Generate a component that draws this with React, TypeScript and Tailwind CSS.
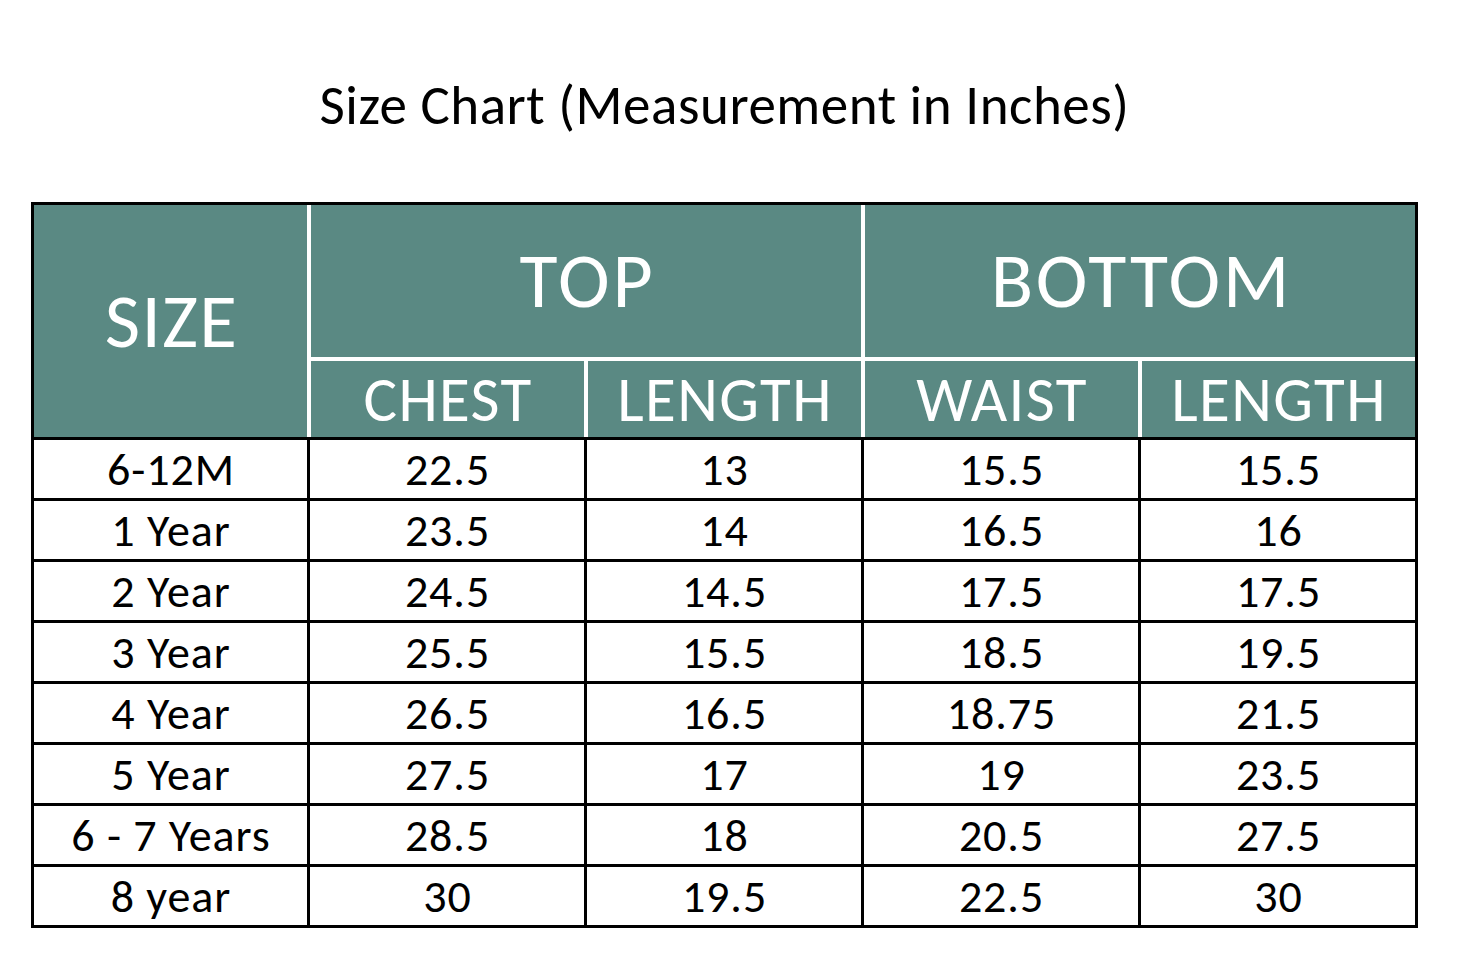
import React from "react";

const rows = [
  ["6-12M", "22.5", "13", "15.5", "15.5"],
  ["1 Year", "23.5", "14", "16.5", "16"],
  ["2 Year", "24.5", "14.5", "17.5", "17.5"],
  ["3 Year", "25.5", "15.5", "18.5", "19.5"],
  ["4 Year", "26.5", "16.5", "18.75", "21.5"],
  ["5 Year", "27.5", "17", "19", "23.5"],
  ["6 - 7 Years", "28.5", "18", "20.5", "27.5"],
  ["8 year", "30", "19.5", "22.5", "30"],
];

const font = { fontFamily: "Carlito, Calibri, Lato, 'Open Sans', sans-serif" };

export default function App() {
  return (
    <div className="min-h-screen w-full bg-white" style={font}>
      <div className="ml-[31px] w-[1387px] pt-[78px]">
        {/* title */}
        <h1 className="h-[55px] text-center text-[55px] leading-none tracking-[0.01em] text-black">
          Size Chart (Measurement in Inches)
        </h1>

        <div className="mt-[69px] border-[3px] border-black">
          {/* header */}
          <div className="flex h-[232px] bg-[#5a8983] text-white">
            <div className="flex w-[273px] items-center justify-center pl-[2px] text-[77px] leading-none tracking-[0.016em]">
              SIZE
            </div>
            <div className="flex flex-1 flex-col border-l-4 border-white">
              <div className="flex h-[156px] border-b-4 border-white text-[78px] leading-none tracking-[0.035em]">
                <div className="flex w-[550px] items-center justify-center pl-[3px]">TOP</div>
                <div className="flex flex-1 items-center justify-center border-l-4 border-white pl-[3px]">
                  BOTTOM
                </div>
              </div>
              <div className="flex flex-1 text-[63px] leading-none tracking-[0.022em]">
                <div className="flex w-[273px] items-center justify-center pl-[1px]">CHEST</div>
                <div className="flex w-[277px] items-center justify-center border-l-4 border-white pl-[1px]">
                  LENGTH
                </div>
                <div className="flex w-[277px] items-center justify-center border-l-4 border-white pl-[1px]">
                  WAIST
                </div>
                <div className="flex flex-1 items-center justify-center border-l-4 border-white pl-[1px]">
                  LENGTH
                </div>
              </div>
            </div>
          </div>

          {/* body */}
          {rows.map((r) => (
            <div
              key={r[0]}
              className="flex h-[61px] border-t-[3px] border-black text-[46px] leading-none tracking-[0.02em] text-black"
            >
              <div className="flex w-[273px] items-center justify-center pl-[1px]">{r[0]}</div>
              {r.slice(1).map((v, i) => (
                <div
                  key={i}
                  className="flex w-[277px] items-center justify-center border-l-[3px] border-black pl-[1px]"
                >
                  {v}
                </div>
              ))}
            </div>
          ))}
        </div>
      </div>
    </div>
  );
}
